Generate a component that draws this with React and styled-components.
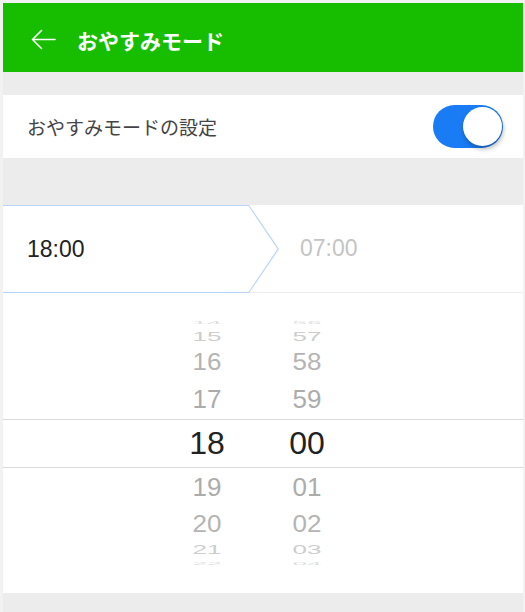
import React from 'react';
import styled, { createGlobalStyle } from 'styled-components';

const GlobalStyle = createGlobalStyle`
    body {
        margin: 0;
        background: #f2f2f2;
        font-family: 'Liberation Sans', 'Noto Sans CJK JP', sans-serif;
    }
`;

// 바깥 테두리
const Frame = styled.div`
    padding: 3px 2px 0 3px;
    height: 609px;
    overflow: hidden;
`;

const Screen = styled.div`
    width: 520px;
    background: #ececec;
    display: flex;
    flex-direction: column;
    height: 100%;
`;

const Header = styled.div`
    height: 69px;
    background: #17be00;
    display: flex;
    align-items: center;
    padding: 4px 0 0 28px;
    box-sizing: border-box;
    gap: 21px;
`;

const Title = styled.div`
    color: white;
    font-family: 'Noto Sans CJK JP', sans-serif;
    font-weight: bold;
    font-size: 21px;
`;

const Gap = styled.div`
    height: ${p => p.h}px;
    flex-shrink: 0;
`;

const SettingRow = styled.div`
    height: 63px;
    background: white;
    display: flex;
    align-items: center;
    padding: 0 20px 0 24px;
    box-sizing: border-box;
`;

const Label = styled.div`
    flex-grow: 1;
    color: #444;
    font-family: 'Noto Sans CJK JP', sans-serif;
    font-size: 19px;
`;

const Toggle = styled.div`
    width: 70px;
    height: 43px;
    border-radius: 22px;
    background: #1a7cf5;
    display: flex;
    justify-content: flex-end;
    align-items: center;
    padding: 0 1px;
    box-sizing: border-box;
`;

const Knob = styled.div`
    width: 39px;
    height: 39px;
    border-radius: 50%;
    background: white;
    box-shadow: 1px 3px 5px rgba(0, 0, 0, 0.3);
`;

const TabRow = styled.div`
    height: 88px;
    background: white;
    display: flex;
    align-items: center;
    border-bottom: 1px solid #eeeeee;
    box-sizing: border-box;
`;

// 화살표 모양 탭
const ActiveTab = styled.div`
    position: relative;
    width: 276px;
    height: 88px;
    margin-top: 1px;
    background: #b8d4f9;
    clip-path: polygon(0 0, 246px 0, 100% 50%, 246px 100%, 0 100%);
    display: flex;
    align-items: center;
    padding-left: 24px;
    box-sizing: border-box;

    &::before {
        content: '';
        position: absolute;
        top: 1px;
        bottom: 1px;
        left: 0;
        right: 1.5px;
        background: white;
        clip-path: polygon(0 0, 245.5px 0, 100% 50%, 245.5px 100%, 0 100%);
    }
`;

const TabText = styled.span`
    position: relative;
    font-size: 23px;
    color: ${p => (p.active ? '#222' : '#c4c4c4')};
`;

const TabPlain = styled.div`
    padding-left: 21px;
`;

const Picker = styled.div`
    height: 300px;
    background: white;
    display: flex;
    flex-direction: column;
    justify-content: center;
    flex-shrink: 0;
`;

const PickRow = styled.div`
    height: ${p => p.h}px;
    display: grid;
    grid-template-columns: 100px 100px;
    padding-left: 154px;
    align-items: center;
    box-sizing: border-box;
    border-top: ${p => (p.selected ? '1px solid #dadada' : 'none')};
    border-bottom: ${p => (p.selected ? '1px solid #dadada' : 'none')};
`;

const PickCell = styled.div`
    text-align: center;
    font-family: 'Liberation Sans', sans-serif;
    font-size: ${p => (p.selected ? 32 : 26)}px;
    line-height: ${p => p.h}px;
    height: ${p => p.h}px;
    color: ${p => p.color};
    transform: scaleY(${p => p.s});
`;

const rows = [
    { h: 12, s: 0.16, color: '#dedede', hour: '14', min: '56' },
    { h: 16, s: 0.48, color: '#cdcdcd', hour: '15', min: '57' },
    { h: 35, s: 0.9, color: '#b4b4b4', hour: '16', min: '58' },
    { h: 39, s: 1, color: '#acacac', hour: '17', min: '59' },
    { h: 47, s: 1, color: '#222', hour: '18', min: '00', selected: true },
    { h: 39, s: 1, color: '#acacac', hour: '19', min: '01' },
    { h: 35, s: 0.9, color: '#b4b4b4', hour: '20', min: '02' },
    { h: 16, s: 0.48, color: '#cdcdcd', hour: '21', min: '03' },
    { h: 12, s: 0.16, color: '#dedede', hour: '22', min: '04' },
];

const BackArrow = () => (
    <svg width="25" height="21" viewBox="0 0 25 21" fill="none" stroke="white" strokeWidth="1.6" strokeLinecap="round" strokeLinejoin="round">
        <path d="M24 10.5H1.5M10.5 1.5L1.5 10.5L10.5 19.5" />
    </svg>
);

const App = () => {
    return (
        <Frame>
            <GlobalStyle />
            <Screen>
                <Header>
                    <BackArrow />
                    <Title>おやすみモード</Title>
                </Header>
                <Gap h={23} />
                <SettingRow>
                    <Label>おやすみモードの設定</Label>
                    <Toggle>
                        <Knob />
                    </Toggle>
                </SettingRow>
                <Gap h={47} />
                <TabRow>
                    <ActiveTab>
                        <TabText active>18:00</TabText>
                    </ActiveTab>
                    <TabPlain>
                        <TabText>07:00</TabText>
                    </TabPlain>
                </TabRow>
                <Picker>
                    {rows.map(r => (
                        <PickRow key={r.hour} h={r.selected ? 49 : r.h} selected={r.selected}>
                            <PickCell h={r.h} s={r.s} color={r.color} selected={r.selected}>{r.hour}</PickCell>
                            <PickCell h={r.h} s={r.s} color={r.color} selected={r.selected}>{r.min}</PickCell>
                        </PickRow>
                    ))}
                </Picker>
            </Screen>
        </Frame>
    );
};

export default App;
